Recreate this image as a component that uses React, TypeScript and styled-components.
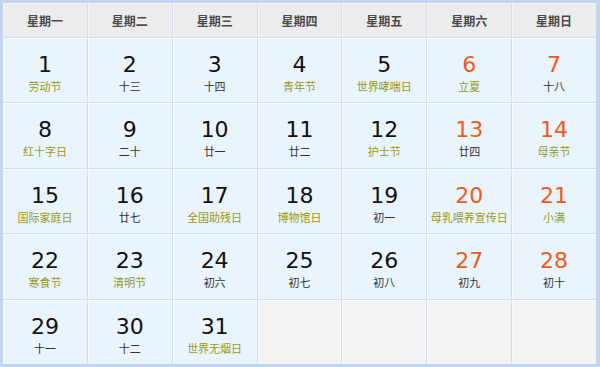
import styled, { createGlobalStyle } from 'styled-components'
import { ReactElement } from 'react'

const GlobalStyle = createGlobalStyle`
  html, body {
    margin: 0;
    padding: 0;
    background: #ffffff;
  }
`

const Frame = styled.div`
  width: 600px;
  height: 367px;
  box-sizing: border-box;
  border: 3px solid #c4d6ef;
  border-right-width: 4px;
  background: #d2deee;
`

const Grid = styled.div`
  display: grid;
  grid-template-columns: repeat(7, 1fr);
  grid-template-rows: 34px repeat(5, 1fr);
  gap: 1px;
  height: 100%;
  background: #d2deee;
`

const HeadCell = styled.div`
  display: flex;
  align-items: center;
  justify-content: center;
  background: #ececec;
  box-shadow: inset 1px 1px 0 #f6f6f6;
  font-family: 'Noto Sans CJK SC', sans-serif;
  font-weight: 700;
  font-size: 12px;
  color: #4a4a4a;
`

const DayCell = styled.div<{ $empty?: boolean }>`
  display: flex;
  flex-direction: column;
  align-items: center;
  padding-top: 14px;
  box-sizing: border-box;
  background: ${({ $empty }) => ($empty ? '#f4f4f4' : '#eaf4fc')};
  box-shadow: inset 1px 1px 0 #f8fbfe;
`

const DayNum = styled.div<{ $weekend?: boolean }>`
  font-family: 'DejaVu Sans', Verdana, sans-serif;
  font-size: 22px;
  line-height: 26px;
  color: ${({ $weekend }) => ($weekend ? '#f05a1a' : '#111')};
`

const Lunar = styled.div<{ $fest?: boolean }>`
  font-family: 'Noto Sans CJK SC', sans-serif;
  font-size: 11px;
  line-height: 16px;
  color: ${({ $fest }) => ($fest ? '#9a9a12' : '#333')};
`

type Day = { n: number; label: string; fest?: boolean }

const weekNames = ['星期一', '星期二', '星期三', '星期四', '星期五', '星期六', '星期日']

const days: Day[] = [
  { n: 1, label: '劳动节', fest: true },
  { n: 2, label: '十三' },
  { n: 3, label: '十四' },
  { n: 4, label: '青年节', fest: true },
  { n: 5, label: '世界哮喘日', fest: true },
  { n: 6, label: '立夏', fest: true },
  { n: 7, label: '十八' },
  { n: 8, label: '红十字日', fest: true },
  { n: 9, label: '二十' },
  { n: 10, label: '廿一' },
  { n: 11, label: '廿二' },
  { n: 12, label: '护士节', fest: true },
  { n: 13, label: '廿四' },
  { n: 14, label: '母亲节', fest: true },
  { n: 15, label: '国际家庭日', fest: true },
  { n: 16, label: '廿七' },
  { n: 17, label: '全国助残日', fest: true },
  { n: 18, label: '博物馆日', fest: true },
  { n: 19, label: '初一' },
  { n: 20, label: '母乳喂养宣传日', fest: true },
  { n: 21, label: '小满', fest: true },
  { n: 22, label: '寒食节', fest: true },
  { n: 23, label: '清明节', fest: true },
  { n: 24, label: '初六' },
  { n: 25, label: '初七' },
  { n: 26, label: '初八' },
  { n: 27, label: '初九' },
  { n: 28, label: '初十' },
  { n: 29, label: '十一' },
  { n: 30, label: '十二' },
  { n: 31, label: '世界无烟日', fest: true },
]

export default function App(): ReactElement {
  const blanks = 35 - days.length
  return (
    <>
      <GlobalStyle />
      <Frame>
        <Grid>
          {weekNames.map((w) => (
            <HeadCell key={w}>{w}</HeadCell>
          ))}
          {days.map((d, i) => (
            <DayCell key={d.n}>
              <DayNum $weekend={i % 7 >= 5}>{d.n}</DayNum>
              <Lunar $fest={d.fest}>{d.label}</Lunar>
            </DayCell>
          ))}
          {Array.from({ length: blanks }).map((_, i) => (
            <DayCell key={'e' + i} $empty />
          ))}
        </Grid>
      </Frame>
    </>
  )
}
